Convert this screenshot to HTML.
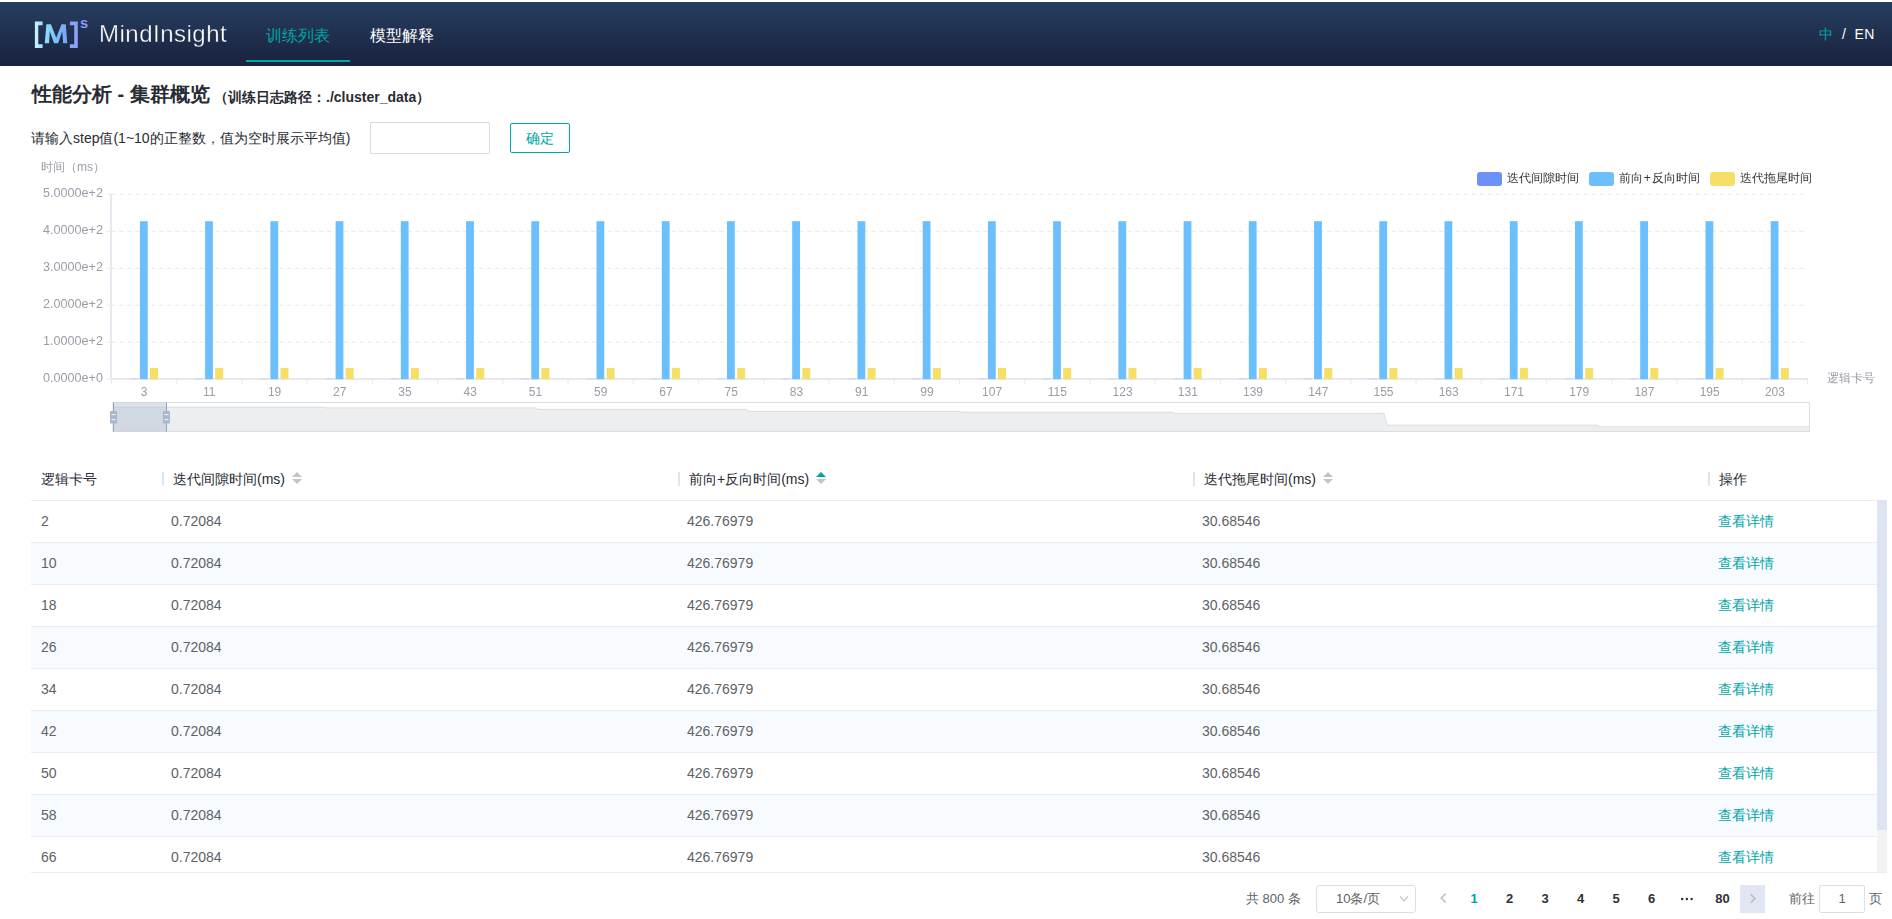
<!DOCTYPE html><html lang="zh"><head><meta charset="utf-8"><title>MindInsight</title><style>
*{box-sizing:border-box;margin:0;padding:0}
html,body{width:1892px;height:919px;overflow:hidden;background:#fff}
body{font-family:"Liberation Sans",sans-serif;position:relative;color:#282b33}
.abs{position:absolute;white-space:nowrap}
#hdr{position:absolute;left:0;top:2px;width:1892px;height:64px;background:linear-gradient(180deg,#273e60 0%,#19223d 100%)}
.nav{position:absolute;top:24px;height:20px;line-height:20px;font-size:16px;color:#fff;white-space:nowrap}
#title{left:32px;top:82px;font-size:20px;line-height:24px;font-weight:bold;color:#282b33}
#sub{left:214px;top:88px;font-size:14px;line-height:18px;font-weight:bold;color:#282b33}
#lbl{left:31px;top:129px;font-size:14px;line-height:18px;color:#282b33}
#inp{left:370px;top:122px;width:120px;height:32px;border:1px solid #d9dadd;border-radius:1px;background:#fff}
#btn{left:510px;top:123px;width:60px;height:30px;border:1px solid #00a5a7;border-radius:2px;color:#00a5a7;font-size:14px;line-height:28px;text-align:center}
.th{position:absolute;top:470px;height:18px;line-height:18px;font-size:14px;color:#282b33;white-space:nowrap}
.sep{position:absolute;top:472px;width:2px;height:14px;background:#e1e4ed}
.row{position:absolute;left:31px;width:1846px;height:42px;border-bottom:1px solid #ebedf2;font-size:14px;line-height:41px;color:#606266}
.row.s{background:#f7fafe}
.row span{position:absolute;top:0;white-space:nowrap}
.row .lk{color:#00a5a7}
.pg{position:absolute;top:885px;height:28px;line-height:28px;font-size:13px;color:#606266;white-space:nowrap}
.pn{position:absolute;top:885px;height:28px;line-height:28px;font-size:13px;font-weight:bold;color:#303133;width:36px;text-align:center}
</style></head><body>
<div id="hdr">
<svg class="abs" style="left:28px;top:10px" width="70" height="44" viewBox="0 0 70 44">
<defs><linearGradient id="lg" gradientUnits="userSpaceOnUse" x1="7" y1="0" x2="50" y2="0"><stop offset="0" stop-color="#cdf0fe"/><stop offset="0.22" stop-color="#93defc"/><stop offset="0.5" stop-color="#78c0f6"/><stop offset="0.75" stop-color="#7aa2f4"/><stop offset="0.85" stop-color="#8aa3f8"/><stop offset="1" stop-color="#8c9ff9"/></linearGradient></defs>
<path d="M6.9 9.6H14.6V13.2H10.3V32.3H14.6V35.9H6.9Z" fill="url(#lg)"/>
<path d="M49.8 9.6H41.9V13.2H46.2V32.3H41.9V35.9H49.8Z" fill="url(#lg)"/>
<path d="M16.76 31.36L18.43 12.21H22.98L28.25 25.85L33.52 12.21H37.82L39.26 31.36H35.19L34.23 19.15L30.16 31.36H26.09L21.78 19.15L21.07 31.36Z" fill="url(#lg)"/>
<text x="52.1" y="15.7" font-family="Liberation Sans, sans-serif" font-size="14.5" font-weight="bold" fill="#8c9cf8">s</text>
</svg>
<div class="abs" style="left:98.5px;top:18px;font-size:24px;line-height:28px;color:#fff;letter-spacing:0.5px;-webkit-text-stroke:0.35px #22314f;will-change:transform">MindInsight</div>
<div class="nav" style="left:266px;color:#00a5a7">训练列表</div>
<div class="abs" style="left:246px;top:58px;width:104px;height:2px;background:#00a5a7"></div>
<div class="nav" style="left:370px">模型解释</div>
<div class="abs" style="left:1819px;top:23px;font-size:14px;line-height:18px;color:#00a5a7">中</div>
<div class="abs" style="left:1842px;top:23px;font-size:14px;line-height:18px;color:#fff">/</div>
<div class="abs" style="left:1854.5px;top:23px;font-size:14px;line-height:18px;color:#fff;letter-spacing:0.3px">EN</div>
</div>
<div id="title" class="abs">性能分析 - 集群概览</div>
<div id="sub" class="abs">（训练日志路径：./cluster_data）</div>
<div id="lbl" class="abs">请输入step值(1~10的正整数，值为空时展示平均值)</div>
<div id="inp" class="abs"></div><div id="btn" class="abs">确定</div>
<svg class="abs" style="left:0;top:0" width="1892" height="450" viewBox="0 0 1892 450" font-family="Liberation Sans, sans-serif" font-size="12">
<line x1="111.5" x2="1807.5" y1="194.3" y2="194.3" stroke="#e6e6ea" stroke-width="1" stroke-dasharray="4 4"/>
<line x1="111.5" x2="1807.5" y1="231.3" y2="231.3" stroke="#e6e6ea" stroke-width="1" stroke-dasharray="4 4"/>
<line x1="111.5" x2="1807.5" y1="268.3" y2="268.3" stroke="#e6e6ea" stroke-width="1" stroke-dasharray="4 4"/>
<line x1="111.5" x2="1807.5" y1="305.2" y2="305.2" stroke="#e6e6ea" stroke-width="1" stroke-dasharray="4 4"/>
<line x1="111.5" x2="1807.5" y1="342.2" y2="342.2" stroke="#e6e6ea" stroke-width="1" stroke-dasharray="4 4"/>
<line x1="106.5" x2="111.5" y1="194.3" y2="194.3" stroke="#e6e9f2" stroke-width="1"/>
<text x="103" y="196.6" text-anchor="end" fill="#999da8" textLength="60" lengthAdjust="spacingAndGlyphs">5.0000e+2</text>
<line x1="106.5" x2="111.5" y1="231.3" y2="231.3" stroke="#e6e9f2" stroke-width="1"/>
<text x="103" y="233.6" text-anchor="end" fill="#999da8" textLength="60" lengthAdjust="spacingAndGlyphs">4.0000e+2</text>
<line x1="106.5" x2="111.5" y1="268.3" y2="268.3" stroke="#e6e9f2" stroke-width="1"/>
<text x="103" y="270.6" text-anchor="end" fill="#999da8" textLength="60" lengthAdjust="spacingAndGlyphs">3.0000e+2</text>
<line x1="106.5" x2="111.5" y1="305.2" y2="305.2" stroke="#e6e9f2" stroke-width="1"/>
<text x="103" y="307.5" text-anchor="end" fill="#999da8" textLength="60" lengthAdjust="spacingAndGlyphs">2.0000e+2</text>
<line x1="106.5" x2="111.5" y1="342.2" y2="342.2" stroke="#e6e9f2" stroke-width="1"/>
<text x="103" y="344.5" text-anchor="end" fill="#999da8" textLength="60" lengthAdjust="spacingAndGlyphs">1.0000e+2</text>
<line x1="106.5" x2="111.5" y1="379.2" y2="379.2" stroke="#e6e9f2" stroke-width="1"/>
<text x="103" y="381.5" text-anchor="end" fill="#999da8" textLength="60" lengthAdjust="spacingAndGlyphs">0.0000e+0</text>
<line x1="111" x2="111" y1="194.3" y2="380.2" stroke="#e6e9f2" stroke-width="2"/>
<line x1="110" x2="1808.0" y1="379" y2="379" stroke="#e6e9f2" stroke-width="2"/>
<line x1="111.5" x2="111.5" y1="379.2" y2="384.2" stroke="#e6e9f2" stroke-width="1"/>
<line x1="176.7" x2="176.7" y1="379.2" y2="384.2" stroke="#e6e9f2" stroke-width="1"/>
<line x1="242.0" x2="242.0" y1="379.2" y2="384.2" stroke="#e6e9f2" stroke-width="1"/>
<line x1="307.2" x2="307.2" y1="379.2" y2="384.2" stroke="#e6e9f2" stroke-width="1"/>
<line x1="372.4" x2="372.4" y1="379.2" y2="384.2" stroke="#e6e9f2" stroke-width="1"/>
<line x1="437.7" x2="437.7" y1="379.2" y2="384.2" stroke="#e6e9f2" stroke-width="1"/>
<line x1="502.9" x2="502.9" y1="379.2" y2="384.2" stroke="#e6e9f2" stroke-width="1"/>
<line x1="568.1" x2="568.1" y1="379.2" y2="384.2" stroke="#e6e9f2" stroke-width="1"/>
<line x1="633.3" x2="633.3" y1="379.2" y2="384.2" stroke="#e6e9f2" stroke-width="1"/>
<line x1="698.6" x2="698.6" y1="379.2" y2="384.2" stroke="#e6e9f2" stroke-width="1"/>
<line x1="763.8" x2="763.8" y1="379.2" y2="384.2" stroke="#e6e9f2" stroke-width="1"/>
<line x1="829.0" x2="829.0" y1="379.2" y2="384.2" stroke="#e6e9f2" stroke-width="1"/>
<line x1="894.3" x2="894.3" y1="379.2" y2="384.2" stroke="#e6e9f2" stroke-width="1"/>
<line x1="959.5" x2="959.5" y1="379.2" y2="384.2" stroke="#e6e9f2" stroke-width="1"/>
<line x1="1024.7" x2="1024.7" y1="379.2" y2="384.2" stroke="#e6e9f2" stroke-width="1"/>
<line x1="1090.0" x2="1090.0" y1="379.2" y2="384.2" stroke="#e6e9f2" stroke-width="1"/>
<line x1="1155.2" x2="1155.2" y1="379.2" y2="384.2" stroke="#e6e9f2" stroke-width="1"/>
<line x1="1220.4" x2="1220.4" y1="379.2" y2="384.2" stroke="#e6e9f2" stroke-width="1"/>
<line x1="1285.7" x2="1285.7" y1="379.2" y2="384.2" stroke="#e6e9f2" stroke-width="1"/>
<line x1="1350.9" x2="1350.9" y1="379.2" y2="384.2" stroke="#e6e9f2" stroke-width="1"/>
<line x1="1416.1" x2="1416.1" y1="379.2" y2="384.2" stroke="#e6e9f2" stroke-width="1"/>
<line x1="1481.3" x2="1481.3" y1="379.2" y2="384.2" stroke="#e6e9f2" stroke-width="1"/>
<line x1="1546.6" x2="1546.6" y1="379.2" y2="384.2" stroke="#e6e9f2" stroke-width="1"/>
<line x1="1611.8" x2="1611.8" y1="379.2" y2="384.2" stroke="#e6e9f2" stroke-width="1"/>
<line x1="1677.0" x2="1677.0" y1="379.2" y2="384.2" stroke="#e6e9f2" stroke-width="1"/>
<line x1="1742.3" x2="1742.3" y1="379.2" y2="384.2" stroke="#e6e9f2" stroke-width="1"/>
<line x1="1807.5" x2="1807.5" y1="379.2" y2="384.2" stroke="#e6e9f2" stroke-width="1"/>
<rect x="129.8" y="378.5" width="8" height="0.7" fill="#6c92fa" opacity="0.35"/>
<rect x="139.9" y="221.2" width="7.8" height="158.0" fill="#6cbfff"/>
<rect x="150.0" y="367.9" width="8" height="11.3" fill="#f6df66"/>
<text x="144.1" y="396" text-anchor="middle" fill="#999da8">3</text>
<rect x="195.0" y="378.5" width="8" height="0.7" fill="#6c92fa" opacity="0.35"/>
<rect x="205.1" y="221.2" width="7.8" height="158.0" fill="#6cbfff"/>
<rect x="215.2" y="367.9" width="8" height="11.3" fill="#f6df66"/>
<text x="209.3" y="396" text-anchor="middle" fill="#999da8">11</text>
<rect x="260.3" y="378.5" width="8" height="0.7" fill="#6c92fa" opacity="0.35"/>
<rect x="270.4" y="221.2" width="7.8" height="158.0" fill="#6cbfff"/>
<rect x="280.5" y="367.9" width="8" height="11.3" fill="#f6df66"/>
<text x="274.6" y="396" text-anchor="middle" fill="#999da8">19</text>
<rect x="325.5" y="378.5" width="8" height="0.7" fill="#6c92fa" opacity="0.35"/>
<rect x="335.6" y="221.2" width="7.8" height="158.0" fill="#6cbfff"/>
<rect x="345.7" y="367.9" width="8" height="11.3" fill="#f6df66"/>
<text x="339.8" y="396" text-anchor="middle" fill="#999da8">27</text>
<rect x="390.7" y="378.5" width="8" height="0.7" fill="#6c92fa" opacity="0.35"/>
<rect x="400.8" y="221.2" width="7.8" height="158.0" fill="#6cbfff"/>
<rect x="410.9" y="367.9" width="8" height="11.3" fill="#f6df66"/>
<text x="405.0" y="396" text-anchor="middle" fill="#999da8">35</text>
<rect x="456.0" y="378.5" width="8" height="0.7" fill="#6c92fa" opacity="0.35"/>
<rect x="466.1" y="221.2" width="7.8" height="158.0" fill="#6cbfff"/>
<rect x="476.2" y="367.9" width="8" height="11.3" fill="#f6df66"/>
<text x="470.3" y="396" text-anchor="middle" fill="#999da8">43</text>
<rect x="521.2" y="378.5" width="8" height="0.7" fill="#6c92fa" opacity="0.35"/>
<rect x="531.3" y="221.2" width="7.8" height="158.0" fill="#6cbfff"/>
<rect x="541.4" y="367.9" width="8" height="11.3" fill="#f6df66"/>
<text x="535.5" y="396" text-anchor="middle" fill="#999da8">51</text>
<rect x="586.4" y="378.5" width="8" height="0.7" fill="#6c92fa" opacity="0.35"/>
<rect x="596.5" y="221.2" width="7.8" height="158.0" fill="#6cbfff"/>
<rect x="606.6" y="367.9" width="8" height="11.3" fill="#f6df66"/>
<text x="600.7" y="396" text-anchor="middle" fill="#999da8">59</text>
<rect x="651.7" y="378.5" width="8" height="0.7" fill="#6c92fa" opacity="0.35"/>
<rect x="661.8" y="221.2" width="7.8" height="158.0" fill="#6cbfff"/>
<rect x="671.9" y="367.9" width="8" height="11.3" fill="#f6df66"/>
<text x="666.0" y="396" text-anchor="middle" fill="#999da8">67</text>
<rect x="716.9" y="378.5" width="8" height="0.7" fill="#6c92fa" opacity="0.35"/>
<rect x="727.0" y="221.2" width="7.8" height="158.0" fill="#6cbfff"/>
<rect x="737.1" y="367.9" width="8" height="11.3" fill="#f6df66"/>
<text x="731.2" y="396" text-anchor="middle" fill="#999da8">75</text>
<rect x="782.1" y="378.5" width="8" height="0.7" fill="#6c92fa" opacity="0.35"/>
<rect x="792.2" y="221.2" width="7.8" height="158.0" fill="#6cbfff"/>
<rect x="802.3" y="367.9" width="8" height="11.3" fill="#f6df66"/>
<text x="796.4" y="396" text-anchor="middle" fill="#999da8">83</text>
<rect x="847.4" y="378.5" width="8" height="0.7" fill="#6c92fa" opacity="0.35"/>
<rect x="857.5" y="221.2" width="7.8" height="158.0" fill="#6cbfff"/>
<rect x="867.6" y="367.9" width="8" height="11.3" fill="#f6df66"/>
<text x="861.7" y="396" text-anchor="middle" fill="#999da8">91</text>
<rect x="912.6" y="378.5" width="8" height="0.7" fill="#6c92fa" opacity="0.35"/>
<rect x="922.7" y="221.2" width="7.8" height="158.0" fill="#6cbfff"/>
<rect x="932.8" y="367.9" width="8" height="11.3" fill="#f6df66"/>
<text x="926.9" y="396" text-anchor="middle" fill="#999da8">99</text>
<rect x="977.8" y="378.5" width="8" height="0.7" fill="#6c92fa" opacity="0.35"/>
<rect x="987.9" y="221.2" width="7.8" height="158.0" fill="#6cbfff"/>
<rect x="998.0" y="367.9" width="8" height="11.3" fill="#f6df66"/>
<text x="992.1" y="396" text-anchor="middle" fill="#999da8">107</text>
<rect x="1043.0" y="378.5" width="8" height="0.7" fill="#6c92fa" opacity="0.35"/>
<rect x="1053.1" y="221.2" width="7.8" height="158.0" fill="#6cbfff"/>
<rect x="1063.2" y="367.9" width="8" height="11.3" fill="#f6df66"/>
<text x="1057.3" y="396" text-anchor="middle" fill="#999da8">115</text>
<rect x="1108.3" y="378.5" width="8" height="0.7" fill="#6c92fa" opacity="0.35"/>
<rect x="1118.4" y="221.2" width="7.8" height="158.0" fill="#6cbfff"/>
<rect x="1128.5" y="367.9" width="8" height="11.3" fill="#f6df66"/>
<text x="1122.6" y="396" text-anchor="middle" fill="#999da8">123</text>
<rect x="1173.5" y="378.5" width="8" height="0.7" fill="#6c92fa" opacity="0.35"/>
<rect x="1183.6" y="221.2" width="7.8" height="158.0" fill="#6cbfff"/>
<rect x="1193.7" y="367.9" width="8" height="11.3" fill="#f6df66"/>
<text x="1187.8" y="396" text-anchor="middle" fill="#999da8">131</text>
<rect x="1238.7" y="378.5" width="8" height="0.7" fill="#6c92fa" opacity="0.35"/>
<rect x="1248.8" y="221.2" width="7.8" height="158.0" fill="#6cbfff"/>
<rect x="1258.9" y="367.9" width="8" height="11.3" fill="#f6df66"/>
<text x="1253.0" y="396" text-anchor="middle" fill="#999da8">139</text>
<rect x="1304.0" y="378.5" width="8" height="0.7" fill="#6c92fa" opacity="0.35"/>
<rect x="1314.1" y="221.2" width="7.8" height="158.0" fill="#6cbfff"/>
<rect x="1324.2" y="367.9" width="8" height="11.3" fill="#f6df66"/>
<text x="1318.3" y="396" text-anchor="middle" fill="#999da8">147</text>
<rect x="1369.2" y="378.5" width="8" height="0.7" fill="#6c92fa" opacity="0.35"/>
<rect x="1379.3" y="221.2" width="7.8" height="158.0" fill="#6cbfff"/>
<rect x="1389.4" y="367.9" width="8" height="11.3" fill="#f6df66"/>
<text x="1383.5" y="396" text-anchor="middle" fill="#999da8">155</text>
<rect x="1434.4" y="378.5" width="8" height="0.7" fill="#6c92fa" opacity="0.35"/>
<rect x="1444.5" y="221.2" width="7.8" height="158.0" fill="#6cbfff"/>
<rect x="1454.6" y="367.9" width="8" height="11.3" fill="#f6df66"/>
<text x="1448.7" y="396" text-anchor="middle" fill="#999da8">163</text>
<rect x="1499.7" y="378.5" width="8" height="0.7" fill="#6c92fa" opacity="0.35"/>
<rect x="1509.8" y="221.2" width="7.8" height="158.0" fill="#6cbfff"/>
<rect x="1519.9" y="367.9" width="8" height="11.3" fill="#f6df66"/>
<text x="1514.0" y="396" text-anchor="middle" fill="#999da8">171</text>
<rect x="1564.9" y="378.5" width="8" height="0.7" fill="#6c92fa" opacity="0.35"/>
<rect x="1575.0" y="221.2" width="7.8" height="158.0" fill="#6cbfff"/>
<rect x="1585.1" y="367.9" width="8" height="11.3" fill="#f6df66"/>
<text x="1579.2" y="396" text-anchor="middle" fill="#999da8">179</text>
<rect x="1630.1" y="378.5" width="8" height="0.7" fill="#6c92fa" opacity="0.35"/>
<rect x="1640.2" y="221.2" width="7.8" height="158.0" fill="#6cbfff"/>
<rect x="1650.3" y="367.9" width="8" height="11.3" fill="#f6df66"/>
<text x="1644.4" y="396" text-anchor="middle" fill="#999da8">187</text>
<rect x="1695.4" y="378.5" width="8" height="0.7" fill="#6c92fa" opacity="0.35"/>
<rect x="1705.5" y="221.2" width="7.8" height="158.0" fill="#6cbfff"/>
<rect x="1715.6" y="367.9" width="8" height="11.3" fill="#f6df66"/>
<text x="1709.7" y="396" text-anchor="middle" fill="#999da8">195</text>
<rect x="1760.6" y="378.5" width="8" height="0.7" fill="#6c92fa" opacity="0.35"/>
<rect x="1770.7" y="221.2" width="7.8" height="158.0" fill="#6cbfff"/>
<rect x="1780.8" y="367.9" width="8" height="11.3" fill="#f6df66"/>
<text x="1774.9" y="396" text-anchor="middle" fill="#999da8">203</text>
<text x="41" y="171" fill="#999da8">时间（ms）</text>
<text x="1827" y="382" fill="#999da8">逻辑卡号</text>
<rect x="1477" y="172" width="25" height="14" rx="3" ry="3" fill="#6c92fa"/>
<text x="1507" y="182" fill="#333">迭代间隙时间</text>
<rect x="1589" y="172" width="25" height="14" rx="3" ry="3" fill="#6cbfff"/>
<text x="1619" y="182" fill="#333">前向<tspan dx="0.8">+</tspan><tspan dx="0.8">反向时间</tspan></text>
<rect x="1710" y="172" width="25" height="14" rx="3" ry="3" fill="#f6df66"/>
<text x="1740" y="182" fill="#333">迭代拖尾时间</text>
<polygon points="113,431.5 113,407.0 323,407.0 326,407.8 535,407.8 538,409.3 746,409.3 749,411.3 959,411.3 962,412.1 1172,412.1 1174,413.2 1384,413.2 1387,425 1597,425 1600,426.7 1809.5,426.7 1809.5,431.5" fill="#2f4554" fill-opacity="0.09"/>
<polyline points="113,407.0 323,407.0 326,407.8 535,407.8 538,409.3 746,409.3 749,411.3 959,411.3 962,412.1 1172,412.1 1174,413.2 1384,413.2 1387,425 1597,425 1600,426.7 1809.5,426.7" fill="none" stroke="#2f4554" stroke-opacity="0.22" stroke-width="0.6"/>
<rect x="113" y="402.5" width="1696.5" height="29.0" fill="none" stroke="#ddd" stroke-width="1"/>
<rect x="113.5" y="402.5" width="53.0" height="29.0" fill="#a7b7cc" fill-opacity="0.4"/>
<line x1="113.5" x2="113.5" y1="402.5" y2="431.5" stroke="#8fa2b8" stroke-width="1"/>
<rect x="110.0" y="411" width="7" height="12.5" rx="1" fill="#a7b7cc"/>
<rect x="111.5" y="414" width="4" height="1.2" fill="#e9eef6"/>
<rect x="111.5" y="419" width="4" height="1.2" fill="#e9eef6"/>
<line x1="166.5" x2="166.5" y1="402.5" y2="431.5" stroke="#8fa2b8" stroke-width="1"/>
<rect x="163.0" y="411" width="7" height="12.5" rx="1" fill="#a7b7cc"/>
<rect x="164.5" y="414" width="4" height="1.2" fill="#e9eef6"/>
<rect x="164.5" y="419" width="4" height="1.2" fill="#e9eef6"/>
</svg>
<div class="th" style="left:41px">逻辑卡号</div>
<div class="sep" style="left:162px"></div>
<div class="th" style="left:173px">迭代间隙时间(ms)<svg style="display:inline-block;vertical-align:top;margin-left:7px;margin-top:2px" width="10" height="14" viewBox="0 0 10 14"><path d="M0 5L5 0L10 5z" fill="#c0c4cc"/><path d="M0 7L5 12L10 7z" fill="#c0c4cc"/></svg></div>
<div class="sep" style="left:678px"></div>
<div class="th" style="left:689px">前向+反向时间(ms)<svg style="display:inline-block;vertical-align:top;margin-left:7px;margin-top:2px" width="10" height="14" viewBox="0 0 10 14"><path d="M0 5L5 0L10 5z" fill="#00a5a7"/><path d="M0 7L5 12L10 7z" fill="#c0c4cc"/></svg></div>
<div class="sep" style="left:1193px"></div>
<div class="th" style="left:1204px">迭代拖尾时间(ms)<svg style="display:inline-block;vertical-align:top;margin-left:7px;margin-top:2px" width="10" height="14" viewBox="0 0 10 14"><path d="M0 5L5 0L10 5z" fill="#c0c4cc"/><path d="M0 7L5 12L10 7z" fill="#c0c4cc"/></svg></div>
<div class="sep" style="left:1708px"></div>
<div class="th" style="left:1719px">操作</div>
<div class="abs" style="left:31px;top:500px;width:1846px;height:1px;background:#ebedf2"></div>
<div class="abs" style="left:0;top:501px;width:1892px;height:372px;overflow:hidden">
<div class="row" style="top:0px"><span style="left:10px">2</span><span style="left:140px">0.72084</span><span style="left:656px">426.76979</span><span style="left:1171px">30.68546</span><span class="lk" style="left:1687px">查看详情</span></div>
<div class="row s" style="top:42px"><span style="left:10px">10</span><span style="left:140px">0.72084</span><span style="left:656px">426.76979</span><span style="left:1171px">30.68546</span><span class="lk" style="left:1687px">查看详情</span></div>
<div class="row" style="top:84px"><span style="left:10px">18</span><span style="left:140px">0.72084</span><span style="left:656px">426.76979</span><span style="left:1171px">30.68546</span><span class="lk" style="left:1687px">查看详情</span></div>
<div class="row s" style="top:126px"><span style="left:10px">26</span><span style="left:140px">0.72084</span><span style="left:656px">426.76979</span><span style="left:1171px">30.68546</span><span class="lk" style="left:1687px">查看详情</span></div>
<div class="row" style="top:168px"><span style="left:10px">34</span><span style="left:140px">0.72084</span><span style="left:656px">426.76979</span><span style="left:1171px">30.68546</span><span class="lk" style="left:1687px">查看详情</span></div>
<div class="row s" style="top:210px"><span style="left:10px">42</span><span style="left:140px">0.72084</span><span style="left:656px">426.76979</span><span style="left:1171px">30.68546</span><span class="lk" style="left:1687px">查看详情</span></div>
<div class="row" style="top:252px"><span style="left:10px">50</span><span style="left:140px">0.72084</span><span style="left:656px">426.76979</span><span style="left:1171px">30.68546</span><span class="lk" style="left:1687px">查看详情</span></div>
<div class="row s" style="top:294px"><span style="left:10px">58</span><span style="left:140px">0.72084</span><span style="left:656px">426.76979</span><span style="left:1171px">30.68546</span><span class="lk" style="left:1687px">查看详情</span></div>
<div class="row" style="top:336px"><span style="left:10px">66</span><span style="left:140px">0.72084</span><span style="left:656px">426.76979</span><span style="left:1171px">30.68546</span><span class="lk" style="left:1687px">查看详情</span></div>
</div>
<div class="abs" style="left:1877px;top:500px;width:10px;height:372px;background:#f3f3f3"></div>
<div class="abs" style="left:1877px;top:500px;width:10px;height:330px;background:#dee4f1"></div>
<div class="abs" style="left:31px;top:872px;width:1856px;height:1px;background:#ebedf2"></div>
<div class="pg" style="left:1246px">共 800 条</div>
<div class="abs" style="left:1316px;top:885px;width:100px;height:28px;border:1px solid #dcdfe6;border-radius:3px"></div>
<div class="pg" style="left:1336px">10条/页</div>
<svg class="abs" style="left:1399px;top:895px" width="10" height="8" viewBox="0 0 10 8"><path d="M1 1.5L5 5.8L9 1.5" fill="none" stroke="#c0c4cc" stroke-width="1.2"/></svg>
<svg class="abs" style="left:1439px;top:892px" width="9" height="12" viewBox="0 0 9 12"><path d="M6.8 1.6L2.2 6.1L6.8 10.6" fill="none" stroke="#c0c4cc" stroke-width="1.6"/></svg>
<div class="pn" style="left:1456.0px;color:#00a5a7;">1</div>
<div class="pn" style="left:1491.5px;">2</div>
<div class="pn" style="left:1527.0px;">3</div>
<div class="pn" style="left:1562.5px;">4</div>
<div class="pn" style="left:1598.0px;">5</div>
<div class="pn" style="left:1633.5px;">6</div>
<div class="pn" style="left:1669.0px;"></div>
<div class="pn" style="left:1704.5px;">80</div>
<svg class="abs" style="left:1679px;top:895px" width="16" height="8" viewBox="0 0 16 8"><circle cx="3.1" cy="4" r="1.25" fill="#303133"/><circle cx="7.9" cy="4" r="1.25" fill="#303133"/><circle cx="12.6" cy="4" r="1.25" fill="#303133"/></svg>
<div class="abs" style="left:1740px;top:885px;width:25px;height:28px;background:#e2e6f3"></div>
<svg class="abs" style="left:1748px;top:892px" width="9" height="12" viewBox="0 0 9 12"><path d="M2.8 2.4L7 6.6L2.8 10.8" fill="none" stroke="#b9bdc8" stroke-width="1.6"/></svg>
<div class="pg" style="left:1789px">前往</div>
<div class="abs" style="left:1819px;top:885px;width:46px;height:28px;border:1px solid #dcdfe6;border-radius:2px;font-size:13px;line-height:26px;text-align:center;color:#606266">1</div>
<div class="pg" style="left:1869px">页</div>
</body></html>
